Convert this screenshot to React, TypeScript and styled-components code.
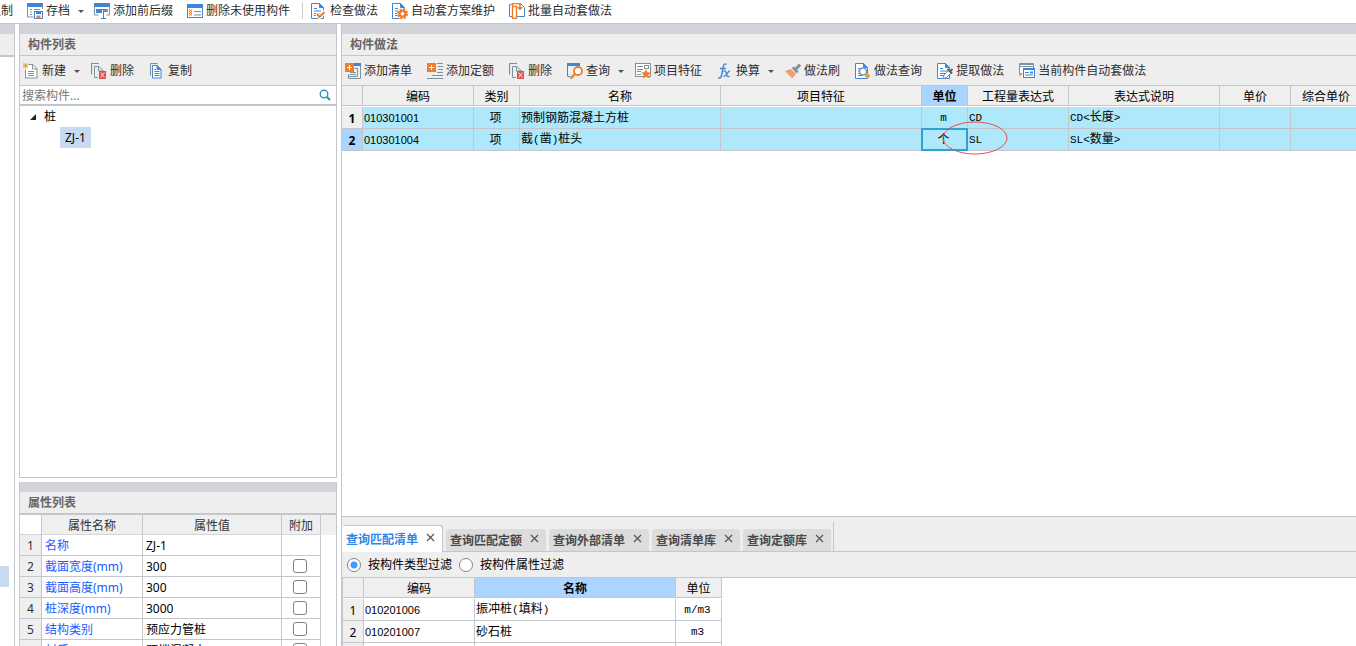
import React from "react";
import styled, { createGlobalStyle, css } from "styled-components";

const GlobalStyle = createGlobalStyle`
  * { box-sizing: border-box; }
  body {
    margin: 0;
    background: #fff;
    color: #000;
    font: 12px/16px "Noto Sans", "Noto Sans CJK SC", sans-serif;
  }
  button, input { font: inherit; color: inherit; }
`;

const line = "#c3c6cc";
const blue = "#3f86d8";
const orange = "#f07d2b";
const slate = "#7f929b";

/* ---------- layout ---------- */

const Page = styled.div`
  display: flex;
  flex-direction: column;
  height: 100vh;
  overflow: hidden;
`;

const Workspace = styled.main`
  flex: 1;
  min-height: 0;
  display: grid;
  grid-template-columns: 15px 318px minmax(0, 1fr);
  column-gap: 4px;
`;

const Column = styled.div<{ $gap?: number }>`
  display: flex;
  flex-direction: column;
  gap: ${(p) => p.$gap ?? 0}px;
  min-width: 0;
  min-height: 0;
`;

const Panel = styled.section<{ $sides?: "both" | "left" | "right"; $height?: number; $closed?: boolean }>`
  display: flex;
  flex-direction: column;
  min-height: 0;
  overflow: hidden;
  ${(p) => (p.$height ? `flex: none; height: ${p.$height}px;` : "flex: 1;")}
  border: 0 solid ${line};
  border-left-width: ${(p) => (p.$sides === "right" ? 0 : 1)}px;
  border-right-width: ${(p) => (p.$sides === "left" ? 0 : 1)}px;
  border-bottom-width: ${(p) => (p.$closed ? 1 : 0)}px;
`;

const PanelTitle = styled.h2<{ $thick?: boolean }>`
  flex: none;
  margin: 0;
  height: ${(p) => (p.$thick ? 33 : 32)}px;
  padding: 2px 8px 0;
  border-top: 10px solid #d3d3da;
  border-bottom: ${(p) => (p.$thick ? 2 : 1)}px solid ${line};
  background: #eee;
  color: #666;
  font-size: 12px;
  line-height: 18px;
  font-weight: 700;
  white-space: nowrap;
`;

/* ---------- toolbars ---------- */

const TopBar = styled.header`
  flex: none;
  display: flex;
  align-items: center;
  gap: 14px;
  height: 24px;
  padding-bottom: 2px;
  margin-left: -11px;
  border-bottom: 1px solid ${line};
  overflow: hidden;
`;

const ToolBar = styled.div`
  flex: none;
  display: flex;
  align-items: center;
  gap: 15px;
  height: 30px;
  padding: 0 3px;
  background: #eee;
  border-bottom: 1px solid ${line};
  overflow: hidden;
`;

const ToolButton = styled.button`
  flex: none;
  display: flex;
  align-items: center;
  gap: 3px;
  padding: 0;
  border: 0;
  background: none;
  color: #2e2e2e;
  white-space: nowrap;
`;

const Caret = styled.span`
  margin: 1px -4px 0 5px;
  border: 3px solid transparent;
  border-top-color: #555;
  border-bottom-width: 0;
`;

const Separator = styled.span`
  width: 1px;
  height: 17px;
  margin: 0 -6px 0 -2px;
  background: #ccc;
`;

const Glyph = styled.svg`
  flex: none;
  display: block;
  width: 16px;
  height: 16px;
`;

/* ---------- component tree ---------- */

const SearchBox = styled.label`
  flex: none;
  display: flex;
  align-items: center;
  height: 20px;
  padding: 0 5px 0 2px;
  border-bottom: 2px solid ${line};
`;

const SearchInput = styled.input`
  flex: 1;
  min-width: 0;
  height: 18px;
  padding: 0;
  border: 0;
  outline: 0;
  background: none;
  &::placeholder { color: #777; opacity: 1; }
`;

const Tree = styled.ul`
  margin: 0;
  padding: 1px 0 0 10px;
  list-style: none;
  ul { margin: 0; padding: 0 0 0 30px; list-style: none; }
`;

const TreeNode = styled.span<{ $selected?: boolean }>`
  display: flex;
  width: fit-content;
  align-items: center;
  gap: 8px;
  height: 20px;
  ${(p) => p.$selected && css`height: 21px; padding: 0 5px; background: #c8daf0;`}
`;

const StripMark = styled.div`
  width: 9px;
  height: 21px;
  margin-top: auto;
  margin-bottom: 59px;
  background: #c8daf0;
`;

/* ---------- tables ---------- */

const DataTable = styled.table<{ $width: string }>`
  flex: none;
  width: ${(p) => p.$width};
  table-layout: fixed;
  border-collapse: separate;
  border-spacing: 0;
  white-space: nowrap;
  th, td { padding: 0; font-weight: 400; overflow: hidden; }
`;

const HeadCell = styled.th<{ $active?: boolean }>`
  height: 20px;
  background: ${(p) => (p.$active ? "#abd4ff" : "#efefef")};
  border-right: 1px solid ${line};
  border-bottom: 1px solid ${line};
  && { font-weight: ${(p) => (p.$active ? 700 : 400)}; padding-top: 2px; }
`;

const HeadGap = styled.tr`
  height: 1px;
  td { height: 1px; line-height: 0; font-size: 0; }
`;

const RowHead = styled.th<{ $active?: boolean; $bold?: boolean }>`
  height: 22px;
  background: ${(p) => (p.$active ? "#abd4ff" : "#efefef")};
  border-right: 1px solid ${line};
  border-bottom: 1px solid ${line};
  && { font-weight: ${(p) => (p.$bold ? 700 : 400)}; padding-top: 2px; }
`;

const Cell = styled.td<{ $center?: boolean; $tinted?: boolean; $focus?: boolean }>`
  position: relative;
  height: 22px;
  text-align: ${(p) => (p.$center ? "center" : "left")};
  background: ${(p) => (p.$tinted ? "#aee8fa" : "#fff")};
  border-right: 1px solid ${line};
  border-bottom: 1px solid ${line};
  && { padding: ${(p) => (p.$center ? "0 2px 0 0" : "0 0 0 1px")}; overflow: visible; }
  ${(p) =>
    p.$focus &&
    css`
      &::after {
        content: "";
        position: absolute;
        inset: -1px;
        border: 2px solid #2fa3d0;
      }
    `}
`;

const Code = styled.span`
  font-family: "Liberation Sans", sans-serif;
  font-size: 11px;
`;

const Mono = styled.span`
  font-family: "Liberation Mono", monospace;
  font-size: 11px;
`;

const Ring = styled.svg`
  position: absolute;
  z-index: 2;
  left: -26px;
  top: -8px;
  width: 66px;
  height: 34px;
  pointer-events: none;
`;

const PropHead = styled.th<{ $blank?: boolean }>`
  height: 20px;
  color: #333;
  background: ${(p) => (p.$blank ? "#fff" : "#efefef")};
  border-bottom: 1px solid #d4d6da;
  border-right: 1px solid ${line};
  && { padding-top: 2px; }
  &:last-child { border-right: 0; border-bottom-color: #efefef; }
`;

const PropCell = styled.td<{ $kind?: "num" | "name" | "check" | "rest" }>`
  height: 21px;
  border-bottom: 1px solid ${line};
  border-right: 1px solid ${line};
  && { padding: 2px 0 0 3px; }
  ${(p) => p.$kind === "num" && css`background: #efefef; color: #333; text-align: center; && { padding: 2px 0 0; }`}
  ${(p) => p.$kind === "name" && css`color: #1a5cff;`}
  ${(p) => p.$kind === "check" && css`&& { padding: 0 2px 0 0; }`}
  ${(p) => p.$kind === "rest" && css`border: 0;`}
`;

const CheckBox = styled.input`
  appearance: none;
  display: block;
  width: 14px;
  height: 14px;
  margin: 0 auto;
  border: 1px solid #808080;
  border-radius: 3px;
  background: #fff;
`;

/* ---------- query tabs ---------- */

const QueryPanel = styled(Panel)`
  background: #eee;
  border-top: 1px solid ${line};
`;

const TabStrip = styled.div`
  flex: none;
  display: flex;
  height: 35px;
  padding-top: 5px;
  border-bottom: 1px solid ${line};
`;

const TabGroup = styled.div`
  display: flex;
  align-items: flex-end;
  gap: 3px;
  padding-right: 2px;
  border-right: 1px solid ${line};
`;

const Tab = styled.button<{ $active?: boolean }>`
  display: flex;
  align-items: center;
  gap: 8px;
  padding: 2px 7px 0 4px;
  border: 0;
  border-radius: 3px 3px 0 0;
  height: 22px;
  background: #dcdcdc;
  color: #4a4a4a;
  font-weight: 700;
  white-space: nowrap;
  ${(p) =>
    p.$active &&
    css`
      height: 26px;
      margin-bottom: -1px;
      margin-right: 1px;
      background: #fff;
      color: #2f86e6;
      box-shadow: 1px -1px 0 ${line};
    `}
`;

const CloseMark = styled.svg`
  width: 9px;
  height: 9px;
  margin-bottom: 5px;
`;

const FilterRow = styled.div`
  flex: none;
  display: flex;
  align-items: center;
  gap: 7px;
  height: 26px;
  padding: 0 5px;
  border-bottom: 1px solid ${line};
`;

const FilterOption = styled.label`
  display: flex;
  align-items: center;
  gap: 7px;
`;

const Radio = styled.input`
  appearance: none;
  width: 14px;
  height: 14px;
  margin: 0;
  border: 1px solid #858585;
  border-radius: 50%;
  background: #fff;
  &:checked { background: radial-gradient(circle, #3d9bff 0 3px, #fff 4px); }
`;

const ResultArea = styled.div`
  flex: 1;
  min-height: 0;
  overflow: hidden;
  padding-left: 1px;
  background: linear-gradient(to right, ${line} 1px, #fff 1px);
`;

/* ---------- icons ---------- */

const DocPath = () => (
  <>
    <path d="M.5.500h8l4 4v11H.5z" fill="#fff" stroke={blue} />
    <path d="M8.500.5v4h4z" fill={blue} stroke={blue} />
    <path d="M3 5.500h3M3 8h7M3 10.500h7M3 12.500h4" stroke={blue} />
  </>
);

const SmallCross = () => (
  <>
    <rect x="8" y="8" width="7" height="8" fill="#d9534f" />
    <path d="M9.500 9.500l4 5M13.500 9.500l-4 5" stroke="#f5c9c7" strokeWidth="1.200" />
  </>
);

const icons: Record<string, React.ReactNode> = {
  archive: (
    <>
      <rect x="0" y="0" width="16" height="4" fill={blue} />
      <path d="M.5 3v11h6M15.500 3v3" fill="none" stroke={slate} />
      <path d="M3 6.500h2M7 6.500h6M3 9h2M3 11.500h2" stroke={slate} />
      <rect x="7.500" y="8.500" width="8" height="7" fill="#fff" stroke={blue} />
      <rect x="9" y="8" width="5" height="3" fill={blue} />
      <rect x="9.500" y="12.500" width="4" height="3" fill={orange} />
    </>
  ),
  affix: (
    <>
      <rect x="0" y="0" width="16" height="4" fill={blue} />
      <path d="M.5 3v9h4M15.500 3v9h-3" fill="none" stroke={slate} />
      <rect x="2" y="6" width="6" height="4" fill={blue} />
      <rect x="9" y="6" width="5" height="3" fill={slate} />
      <path d="M9.500 7.500v8M7 15.500h5M7 6.500h5" stroke={blue} />
    </>
  ),
  unused: (
    <>
      <rect x=".5" y="1.500" width="15" height="13" fill="#fff" stroke={blue} />
      <rect x="0" y="1" width="16" height="4" fill={blue} />
      <path d="M2 6.500l3 2-3 2 3 2M5 6.500l-3 2 3 2-3 2" fill="none" stroke={orange} />
      <path d="M7 8.500h7M7 12h7" stroke={slate} />
    </>
  ),
  check: (
    <>
      <DocPath />
      <path d="M5.500 10l3 4L14 8.500" fill="none" stroke="#fff" strokeWidth="4" />
      <path d="M6 11l2.500 3 5-5" fill="none" stroke={orange} strokeWidth="2" />
    </>
  ),
  gear: (
    <>
      <DocPath />
      <circle cx="10.500" cy="10.800" r="5.500" fill="#fff" />
      <circle cx="10.500" cy="10.800" r="4.500" fill="none" stroke={orange} strokeWidth="2" strokeDasharray="2.200 1.330" />
      <circle cx="10.500" cy="10.800" r="2.900" fill="none" stroke={orange} strokeWidth="2.200" />
    </>
  ),
  batch: (
    <>
      <path d="M2.500 1.500h-2v12h3" fill="none" stroke={blue} />
      <path d="M10 1.500h2.500l3 3v9H8" fill="#fff" stroke={blue} />
      <path d="M3.500 3.500h4v12h-4z" fill="#fff" stroke={orange} strokeWidth="1.400" />
      <path d="M3.500 3.500v-3H11v4" fill="none" stroke={orange} strokeWidth="1.600" />
      <path d="M8 4h6l-3 3.500z" fill={orange} />
    </>
  ),
  create: (
    <>
      <path d="M5.500 1.500H10l4 4v9.500H2.500V6.500" fill="#fff" stroke={slate} />
      <path d="M9.500 1.500v4.500H14M5 8.500h6M5 10.500h6M5 12.500h6" fill="none" stroke={slate} />
      <path d="M0 .5l5 4.500M5 .5L0 5M2.500 0v5.500M0 2.800h5" stroke="#f0a030" />
    </>
  ),
  remove: (
    <>
      <path d="M.5 11.500V.5H8" fill="none" stroke={slate} strokeWidth="1.200" />
      <path d="M3.500 14.500V3.500H8L12.500 8M7.500 3.500v4.500h4.500M3.500 14.500H7" fill="none" stroke={slate} />
      <SmallCross />
    </>
  ),
  copy: (
    <>
      <path d="M1.500 12.500V.5h7" fill="none" stroke={slate} />
      <path d="M3.500 2.500H8l4 4v8.500H3.500z" fill="#fff" stroke={blue} />
      <path d="M8 2.500v4h4zM5.500 8.500h5M5.500 10.500h5M5.500 12.500h5M5.500 6.500H7" fill={blue} stroke={blue} />
    </>
  ),
  addList: (
    <>
      <rect x="9" y="0" width="7" height="3" fill={blue} />
      <path d="M15.500 3v8M12.500 5v8M9.500 5.500h3M5 9.500h6M5 11.500h6M15.500 11v4.500h-12V11M3.500 13.500h9" fill="none" stroke={slate} />
      <rect x="0" y="0" width="9" height="9" fill={orange} />
      <path d="M4.500 2v5M2 4.500h5" stroke="#fff" />
    </>
  ),
  addQuota: (
    <>
      <path d="M10 .5h6M11 3.500h5M11 6.500h5M10 9.500h6M5 12.500h11M0 15.500h16" stroke={slate} />
      <rect x="0" y="0" width="9" height="9" fill={orange} />
      <path d="M4.500 2v5M2 4.500h5" stroke="#fff" />
    </>
  ),
  query: (
    <>
      <path d="M.5 13.500V1M1 13.500h2" stroke={blue} />
      <rect x="0" y="0" width="13" height="3" fill={blue} />
      <circle cx="11" cy="8" r="4" fill="#fff" stroke={orange} strokeWidth="1.800" />
      <path d="M8 11l-4.500 4.500" stroke={orange} strokeWidth="2.400" />
    </>
  ),
  feature: (
    <>
      <rect x=".5" y=".5" width="15" height="13" fill="#fff" stroke={slate} />
      <path d="M2 3.500h6M2 6.500h6M2 8.500h4M2 11.500h4" stroke={slate} />
      <rect x="9.500" y="2.500" width="4" height="3" fill="#fff" stroke={slate} />
      <path d="M11 6l1.500 3.200 3.500.4-2.600 2.300.8 3.600-3.200-1.800-3.200 1.800.8-3.600L6 9.600l3.500-.4z" fill={orange} />
    </>
  ),
  brush: (
    <>
      <path d="M0 8l6-2 5 5-4 4.500z" fill="#f79b73" />
      <path d="M6 5l5.500 5.500" stroke="#fff" />
      <path d="M6.500 5L9 3.500l4.500 5-2 2z" fill={slate} />
      <path d="M11 6l4-4.500" stroke={slate} strokeWidth="3" />
    </>
  ),
  inspect: (
    <>
      <DocPath />
      <circle cx="8" cy="8.500" r="3.500" fill="#fff" stroke="#7794c8" strokeWidth="1.500" />
      <path d="M10.500 11l1.500 1.500" stroke={blue} />
      <path d="M12.500 10l2.800 3-2.800 3-2.800-3z" fill="#f59a20" />
    </>
  ),
  extract: (
    <>
      <DocPath />
      <path d="M6 15.500l1-3.500 5-5 2.500 2.500-5 5z" fill="#fff" stroke={slate} />
      <path d="M10.500 6l4.500 4.500M13 8.500l2.500-2.500" stroke="#53656e" strokeWidth="2" />
    </>
  ),
  auto: (
    <>
      <path d="M3 10.500H.5V.5h14V5" fill="#fff" stroke={slate} />
      <path d="M1 3.500h13M1 1.500h13" stroke={slate} />
      <rect x="4.500" y="5.500" width="11" height="9" fill="#fff" stroke={blue} />
      <path d="M4 6.500h12M6 9.500h4M6 12h8" stroke={blue} />
      <rect x="11" y="8.500" width="3" height="2" fill={blue} />
      <path d="M.5 10.500h3l-3 3z" fill={orange} />
    </>
  ),
  fx: (
    <>
      <path d="M9.500 1.500C7.800.3 6.700 1.500 6.300 3.600L4.700 12c-.4 2.300-1.700 3.800-3.700 2.700M3 5.500h6" fill="none" stroke={blue} strokeWidth="1.400" />
      <path d="M6.500 8.500c2-1.500 2.300 0 3 2.500s1.200 3.500 3 2M13 8c-2.500 0-3.500 5.500-6.500 5.500" fill="none" stroke={blue} strokeWidth="1.300" />
    </>
  ),
};

const Icon = ({ name }: { name: string }) => (
  <Glyph viewBox="0 0 16 16" fill="none" aria-hidden="true">
    {icons[name]}
  </Glyph>
);

type Tool = { icon?: string; label: string; menu?: boolean };

const ToolItem = ({ icon, label, menu }: Tool) => (
  <ToolButton type="button">
    {icon && <Icon name={icon} />}
    {label}
    {menu && <Caret />}
  </ToolButton>
);

/* ---------- data ---------- */

const fileTools: Tool[] = [
  { label: "复制" },
  { icon: "archive", label: "存档", menu: true },
  { icon: "affix", label: "添加前后缀" },
  { icon: "unused", label: "删除未使用构件" },
];
const methodTools: Tool[] = [
  { icon: "check", label: "检查做法" },
  { icon: "gear", label: "自动套方案维护" },
  { icon: "batch", label: "批量自动套做法" },
];
const listTools: Tool[] = [
  { icon: "create", label: "新建", menu: true },
  { icon: "remove", label: "删除" },
  { icon: "copy", label: "复制" },
];
const practiceTools: Tool[] = [
  { icon: "addList", label: "添加清单" },
  { icon: "addQuota", label: "添加定额" },
  { icon: "remove", label: "删除" },
  { icon: "query", label: "查询", menu: true },
  { icon: "feature", label: "项目特征" },
  { icon: "fx", label: "换算", menu: true },
  { icon: "brush", label: "做法刷" },
  { icon: "inspect", label: "做法查询" },
  { icon: "extract", label: "提取做法" },
  { icon: "auto", label: "当前构件自动套做法" },
];

const properties = [
  { name: "名称", value: "ZJ-1", extra: false },
  { name: "截面宽度(mm)", value: "300", extra: true },
  { name: "截面高度(mm)", value: "300", extra: true },
  { name: "桩深度(mm)", value: "3000", extra: true },
  { name: "结构类别", value: "预应力管桩", extra: true },
  { name: "材质", value: "预拌混凝土", extra: true },
];

const practiceColumns = [
  ["编码", 111], ["类别", 46], ["名称", 201], ["项目特征", 201], ["单位", 46],
  ["工程量表达式", 101], ["表达式说明", 151], ["单价", 71], ["综合单价", 71],
] as const;

const practiceRows = [
  { code: "010301001", kind: "项", name: <>预制钢筋混凝土方桩</>, unit: <Mono>m</Mono>, expr: "CD", note: "长度" },
  { code: "010301004", kind: "项", name: <>截<Mono>(</Mono>凿<Mono>)</Mono>桩头</>, unit: <>个</>, expr: "SL", note: "数量" },
];

const tabs = ["查询匹配清单", "查询匹配定额", "查询外部清单", "查询清单库", "查询定额库"];

const results = [
  { code: "010201006", name: <>振冲桩<Mono>(</Mono>填料<Mono>)</Mono></>, unit: "m/m3" },
  { code: "010201007", name: <>砂石桩</>, unit: "m3" },
];

/* ---------- sections ---------- */

const PropertyTable = () => (
  <DataTable $width="100%">
    <colgroup>
      <col style={{ width: 22 }} />
      <col style={{ width: 101 }} />
      <col style={{ width: 139 }} />
      <col style={{ width: 39 }} />
      <col />
    </colgroup>
    <thead>
      <tr>
        <PropHead $blank />
        <PropHead>属性名称</PropHead>
        <PropHead>属性值</PropHead>
        <PropHead>附加</PropHead>
        <PropHead />
      </tr>
    </thead>
    <tbody>
      {properties.map((p, i) => (
        <tr key={p.name}>
          <PropCell $kind="num">{i + 1}</PropCell>
          <PropCell $kind="name">{p.name}</PropCell>
          <PropCell>{p.value}</PropCell>
          <PropCell $kind="check">
            {p.extra && <CheckBox type="checkbox" aria-label={`附加 ${p.name}`} />}
          </PropCell>
          <PropCell $kind="rest" />
        </tr>
      ))}
    </tbody>
  </DataTable>
);

const PracticeTable = () => (
  <DataTable $width="1020px">
    <colgroup>
      <col style={{ width: 21 }} />
      {practiceColumns.map(([label, width]) => (
        <col key={label} style={{ width }} />
      ))}
    </colgroup>
    <thead>
      <tr>
        <HeadCell />
        {practiceColumns.map(([label]) => (
          <HeadCell key={label} $active={label === "单位"}>{label}</HeadCell>
        ))}
      </tr>
      <HeadGap><td colSpan={10} /></HeadGap>
    </thead>
    <tbody>
      {practiceRows.map((r, i) => (
        <tr key={r.code}>
          <RowHead $bold $active={i === 1}>{i + 1}</RowHead>
          <Cell $tinted><Code>{r.code}</Code></Cell>
          <Cell $tinted $center>{r.kind}</Cell>
          <Cell $tinted>{r.name}</Cell>
          <Cell $tinted />
          <Cell $tinted $center $focus={i === 1}>{r.unit}</Cell>
          <Cell $tinted>
            <Mono>{r.expr}</Mono>
            {i === 1 && (
              <Ring viewBox="0 0 66 34" fill="none" aria-hidden="true">
                <ellipse cx="33" cy="17" rx="32" ry="16" stroke="#ee4b4b" />
              </Ring>
            )}
          </Cell>
          <Cell $tinted><Mono>{r.expr}&lt;</Mono>{r.note}<Mono>&gt;</Mono></Cell>
          <Cell $tinted />
          <Cell $tinted />
        </tr>
      ))}
    </tbody>
  </DataTable>
);

const ResultTable = () => (
  <DataTable $width="379px">
    <colgroup>
      <col style={{ width: 21 }} />
      <col style={{ width: 111 }} />
      <col style={{ width: 201 }} />
      <col style={{ width: 46 }} />
    </colgroup>
    <thead>
      <tr>
        <HeadCell />
        <HeadCell>编码</HeadCell>
        <HeadCell $active>名称</HeadCell>
        <HeadCell>单位</HeadCell>
      </tr>
      <HeadGap><td colSpan={4} /></HeadGap>
    </thead>
    <tbody>
      {results.map((r, i) => (
        <tr key={r.code}>
          <RowHead>{i + 1}</RowHead>
          <Cell><Code>{r.code}</Code></Cell>
          <Cell>{r.name}</Cell>
          <Cell $center><Mono>{r.unit}</Mono></Cell>
        </tr>
      ))}
      <tr>
        <RowHead />
        <Cell />
        <Cell />
        <Cell />
      </tr>
    </tbody>
  </DataTable>
);

export default function App() {
  return (
    <>
      <GlobalStyle />
      <Page>
        <TopBar>
          {fileTools.map((t) => <ToolItem key={t.label} {...t} />)}
          <Separator />
          {methodTools.map((t) => <ToolItem key={t.label} {...t} />)}
        </TopBar>
        <Workspace>
          <Panel $sides="right">
            <PanelTitle $thick />
            <StripMark />
          </Panel>

          <Column $gap={4}>
            <Panel $sides="both" $closed>
              <PanelTitle>构件列表</PanelTitle>
              <ToolBar>
                {listTools.map((t) => <ToolItem key={t.label} {...t} />)}
              </ToolBar>
              <SearchBox>
                <SearchInput type="text" placeholder="搜索构件..." aria-label="搜索构件" />
                <svg width="12" height="12" viewBox="0 0 12 12" fill="none" aria-hidden="true">
                  <circle cx="5" cy="5" r="3.800" stroke="#2d8bbd" strokeWidth="1.300" />
                  <path d="M8 8l3 3" stroke="#2d8bbd" strokeWidth="2" />
                </svg>
              </SearchBox>
              <Tree>
                <li>
                  <TreeNode>
                    <svg width="6" height="6" viewBox="0 0 6 6" aria-hidden="true">
                      <path d="M6 0v6H0z" fill="#222" />
                    </svg>
                    桩
                  </TreeNode>
                  <ul>
                    <li><TreeNode $selected>ZJ-1</TreeNode></li>
                  </ul>
                </li>
              </Tree>
            </Panel>
            <Panel $sides="both" $height={164}>
              <PanelTitle $thick>属性列表</PanelTitle>
              <PropertyTable />
            </Panel>
          </Column>

          <Column>
            <Panel $sides="left">
              <PanelTitle>构件做法</PanelTitle>
              <ToolBar>
                {practiceTools.map((t) => <ToolItem key={t.label} {...t} />)}
              </ToolBar>
              <PracticeTable />
            </Panel>
            <QueryPanel $sides="left" $height={130}>
              <TabStrip>
                <TabGroup role="tablist">
                  {tabs.map((t, i) => (
                    <Tab key={t} type="button" role="tab" aria-selected={i === 0} $active={i === 0}>
                      {t}
                      <CloseMark viewBox="0 0 9 9" aria-hidden="true">
                        <path d="M1 1l7 7M8 1L1 8" stroke="#555" strokeWidth="1.200" />
                      </CloseMark>
                    </Tab>
                  ))}
                </TabGroup>
              </TabStrip>
              <FilterRow>
                <FilterOption><Radio type="radio" name="filter" defaultChecked />按构件类型过滤</FilterOption>
                <FilterOption><Radio type="radio" name="filter" />按构件属性过滤</FilterOption>
              </FilterRow>
              <ResultArea>
                <ResultTable />
              </ResultArea>
            </QueryPanel>
          </Column>
        </Workspace>
      </Page>
    </>
  );
}
